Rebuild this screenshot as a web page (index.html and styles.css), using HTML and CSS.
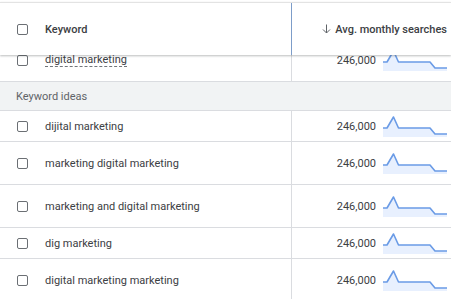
FILE: index.html
```html
<!DOCTYPE html>
<html lang="en">
<head>
    <meta charset="UTF-8">
    <meta name="viewport" content="width=device-width, initial-scale=1.0">
    <title>keyword-ideas</title>
    <link rel="stylesheet" href="styles.css">
</head>
<body>
    <svg class="defs" width="0" height="0">
        <defs>
            <symbol id="spark" viewBox="0 0 64 21">
                <path d="M0 12 L4 12 L10.5 1 L15.5 12 L47 12 L52 18 L64 18 L64 21 L0 21 Z" fill="#e8f0fe"/>
                <path d="M0 12 L4 12 L10.5 1 L15.5 12 L47 12 L52 18 L64 18" fill="none" stroke="#6a9be6" stroke-width="1.6" stroke-linejoin="round"/>
            </symbol>
        </defs>
    </svg>

    <div class="table">
        <div class="head">
            <div class="cell kw"><span class="check"></span><span class="title">Keyword</span></div>
            <div class="cell vol sorted">
                <svg class="arrow" width="9" height="10" viewBox="0 0 9 10"><path d="M4.5 0.5 V9 M1 5.5 L4.5 9 L8 5.5" fill="none" stroke="#5f6368" stroke-width="1"/></svg>
                <span class="title">Avg. monthly searches</span>
            </div>
        </div>

        <div class="row tall first">
            <div class="cell kw"><span class="check"></span><span class="dotted">digital marketing</span></div>
            <div class="cell vol"><span class="num">246,000</span><svg class="spark"><use href="#spark"/></svg></div>
        </div>

        <div class="group">Keyword ideas</div>

        <div class="row">
            <div class="cell kw"><span class="check"></span>dijital marketing</div>
            <div class="cell vol"><span class="num">246,000</span><svg class="spark"><use href="#spark"/></svg></div>
        </div>
        <div class="row tall">
            <div class="cell kw"><span class="check"></span>marketing digital marketing</div>
            <div class="cell vol"><span class="num">246,000</span><svg class="spark"><use href="#spark"/></svg></div>
        </div>
        <div class="row tall">
            <div class="cell kw"><span class="check"></span>marketing and digital marketing</div>
            <div class="cell vol"><span class="num">246,000</span><svg class="spark"><use href="#spark"/></svg></div>
        </div>
        <div class="row">
            <div class="cell kw"><span class="check"></span>dig marketing</div>
            <div class="cell vol"><span class="num">246,000</span><svg class="spark"><use href="#spark"/></svg></div>
        </div>
        <div class="row tall">
            <div class="cell kw"><span class="check"></span>digital marketing marketing</div>
            <div class="cell vol"><span class="num">246,000</span><svg class="spark"><use href="#spark"/></svg></div>
        </div>
    </div>
</body>
</html>
```

FILE: styles.css
```css
body {
    margin: 0;
    background: white;
    font-family: Roboto, "Liberation Sans", sans-serif;
    font-size: 11px;
    color: #3c4043;
    overflow: hidden;
}
.defs {
    position: absolute;
}
.table {
    padding-top: 2px;
}
.head {
    position: relative;
    z-index: 1;
    display: grid;
    grid-template-columns: 291px 1fr;
    height: 52px;
    background: white;
    border-top: 1px solid #e3e3e3;
    box-shadow: 0 1px 2px rgba(60, 64, 67, 0.35);
}
.head .title {
    font-weight: 500;
    color: #3c4043;
}
.row {
    display: grid;
    grid-template-columns: 291px 1fr;
    height: 30px;
    border-bottom: 1px solid #dadce0;
}
.row.tall {
    height: 42px;
}
.row.first {
    margin-top: -16px;
}
.cell {
    display: flex;
    align-items: center;
}
.kw {
    padding-left: 17px;
}
.vol {
    justify-content: flex-end;
    padding-right: 4px;
    border-left: 1px solid #dadce0;
}
.head .vol {
    border-left-color: #7d9dc9;
}
.check {
    box-sizing: border-box;
    width: 11px;
    height: 11px;
    margin-right: 17px;
    border: 1.5px solid #6b6f74;
    border-radius: 2px;
}
.arrow {
    margin-right: 4px;
}
.dotted {
    border-bottom: 1px dashed #70757a;
    line-height: 13px;
}
.num {
    margin-right: 7px;
}
.spark {
    width: 64px;
    height: 21px;
}
.group {
    height: 28px;
    padding-left: 16px;
    display: flex;
    align-items: center;
    background: #f1f3f4;
    color: #5f6368;
    border-bottom: 1px solid #dadce0;
}
```
